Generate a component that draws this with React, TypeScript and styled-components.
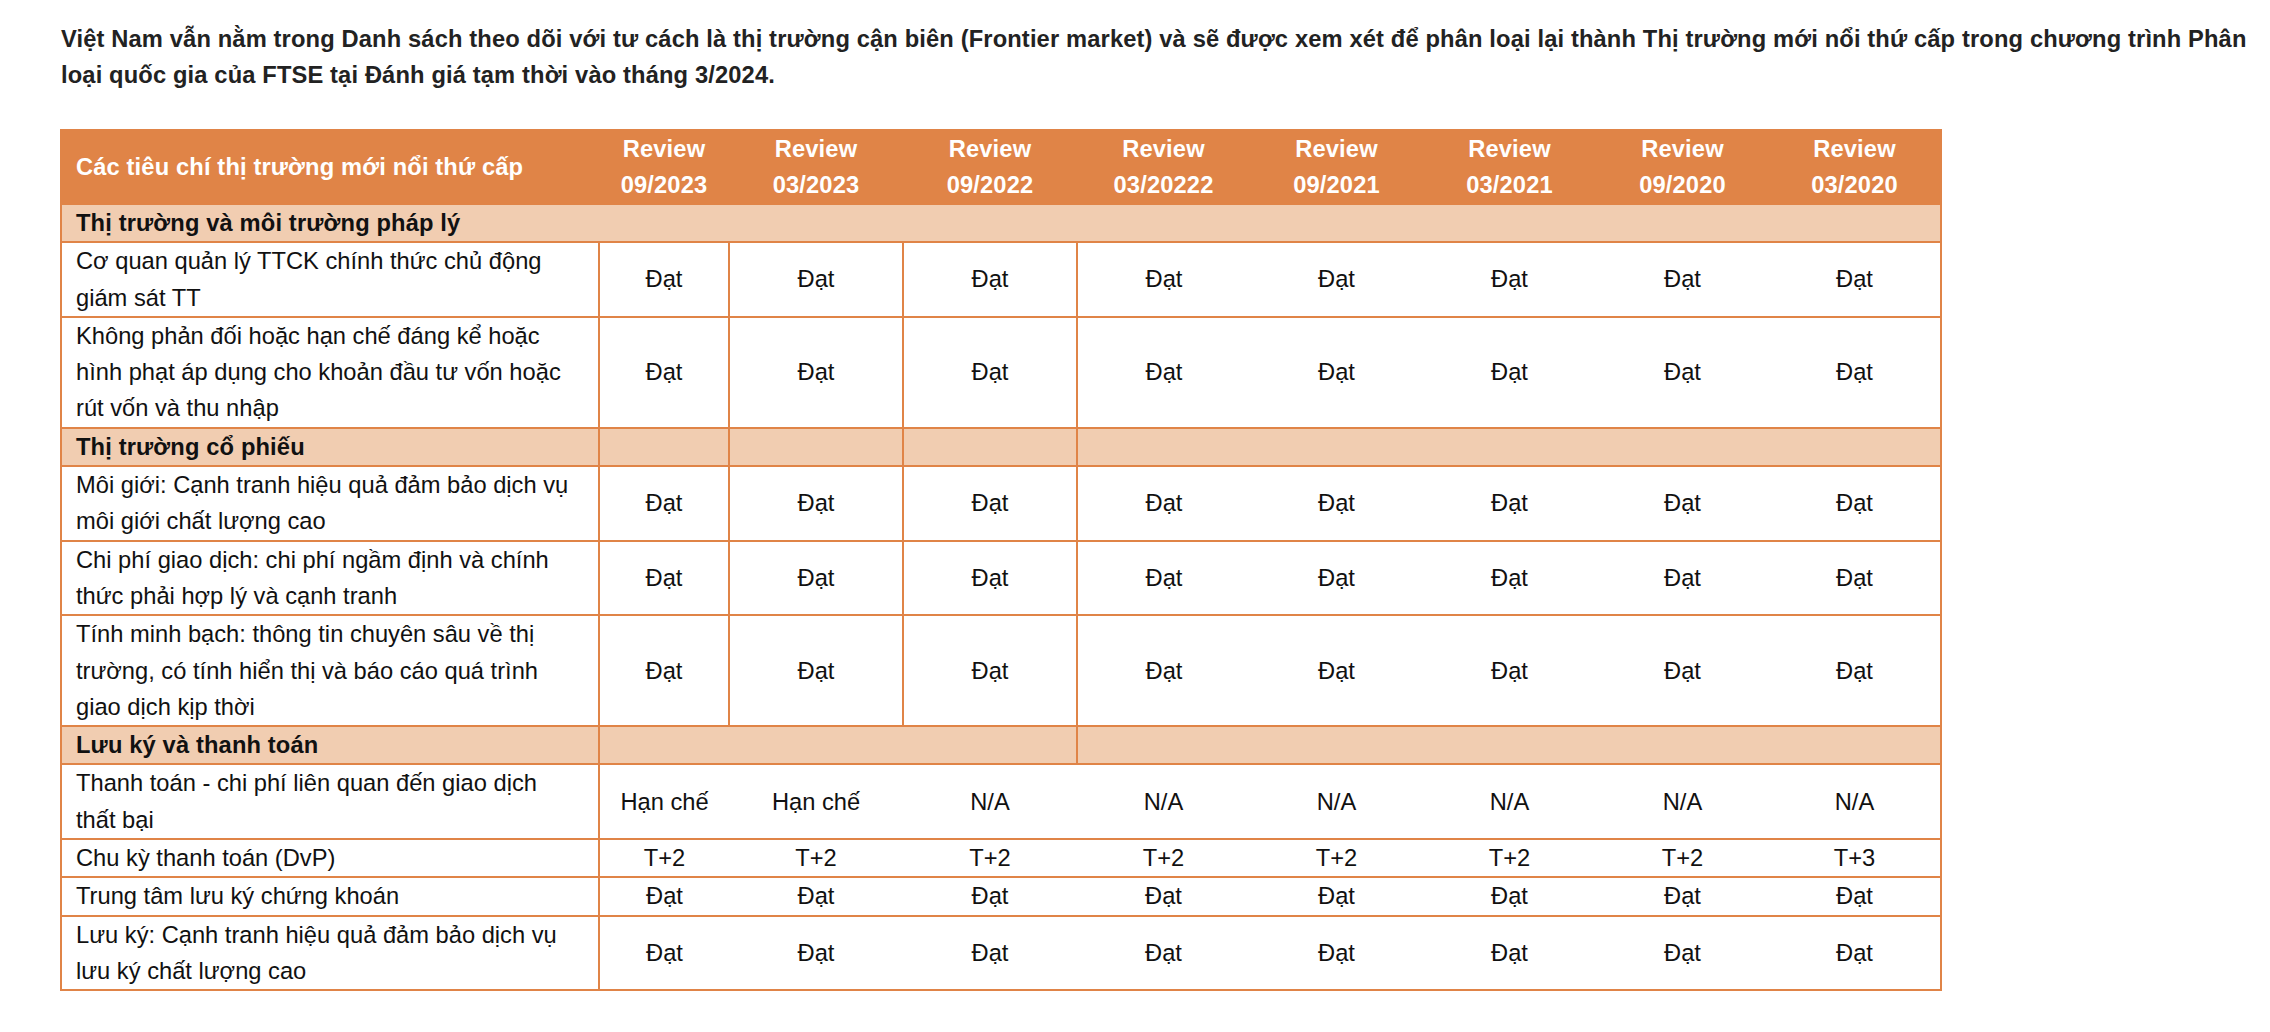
import React from "react";
import styled, { createGlobalStyle } from "styled-components";

const ORANGE = "#e08447";
const PEACH = "#f1cdb1";

const Global = createGlobalStyle`
  html, body { margin: 0; padding: 0; background: #ffffff; }
  body { font-family: "Liberation Sans", Arial, Helvetica, sans-serif; }
`;

const Page = styled.div`
  padding: 21px 10px 40px 60px;
  font-size: 23.7px;
`;

const Intro = styled.p`
  margin: 0 0 36px 1px;
  font-weight: 700;
  letter-spacing: 0.14px;
  line-height: 36px;
  color: #222222;
`;

const Table = styled.table`
  width: 1880px;
  table-layout: fixed;
  border-collapse: collapse;
  border: 2px solid ${ORANGE};
  color: #111111;
`;

const HeadCell = styled.th<{ $left?: boolean }>`
  background: ${ORANGE};
  color: #ffffff;
  font-weight: 700;
  letter-spacing: 0.14px;
  line-height: 36px;
  padding: ${(p) => (p.$left ? "0 10px 0 14px" : "0 2px")};
  text-align: ${(p) => (p.$left ? "left" : "center")};
  vertical-align: middle;
  border: none;
`;

const Row = styled.tr<{ $section?: boolean }>`
  background: ${(p) => (p.$section ? PEACH : "#ffffff")};
`;

const Cell = styled.td<{ $label?: boolean; $divider?: boolean; $bold?: boolean }>`
  line-height: 36.3px;
  padding: ${(p) => (p.$label ? "0 20px 0 14px" : "0 4px")};
  text-align: ${(p) => (p.$label ? "left" : "center")};
  vertical-align: middle;
  font-weight: ${(p) => (p.$bold ? 700 : 400)};
  letter-spacing: ${(p) => (p.$bold ? "0.14px" : "normal")};
  border-top: 2px solid ${ORANGE};
  border-bottom: 2px solid ${ORANGE};
  border-left: ${(p) => (p.$divider ? `2px solid ${ORANGE}` : "none")};
  border-right: none;
`;

const reviews = [
  "09/2023",
  "03/2023",
  "09/2022",
  "03/20222",
  "09/2021",
  "03/2021",
  "09/2020",
  "03/2020",
];

const widths = [538, 130, 174, 174, 173, 173, 173, 173, 172];

type DataRow = { label: string; values: string[]; dividers: number };

const dat = Array(8).fill("Đạt");

const group1: DataRow[] = [
  { label: "Cơ quan quản lý TTCK chính thức chủ động giám sát TT", values: dat, dividers: 4 },
  {
    label: "Không phản đối hoặc hạn chế đáng kể hoặc hình phạt áp dụng cho khoản đầu tư vốn hoặc rút vốn và thu nhập",
    values: dat,
    dividers: 4,
  },
];

const group2: DataRow[] = [
  { label: "Môi giới: Cạnh tranh hiệu quả đảm bảo dịch vụ môi giới chất lượng cao", values: dat, dividers: 4 },
  { label: "Chi phí giao dịch: chi phí ngầm định và chính thức phải hợp lý và cạnh tranh", values: dat, dividers: 4 },
  {
    label: "Tính minh bạch: thông tin chuyên sâu về thị trường, có tính hiển thị và báo cáo quá trình giao dịch kịp thời",
    values: dat,
    dividers: 4,
  },
];

const group3: DataRow[] = [
  {
    label: "Thanh toán - chi phí liên quan đến giao dịch thất bại",
    values: ["Hạn chế", "Hạn chế", "N/A", "N/A", "N/A", "N/A", "N/A", "N/A"],
    dividers: 1,
  },
  { label: "Chu kỳ thanh toán (DvP)", values: ["T+2", "T+2", "T+2", "T+2", "T+2", "T+2", "T+2", "T+3"], dividers: 1 },
  { label: "Trung tâm lưu ký chứng khoán", values: dat, dividers: 1 },
  { label: "Lưu ký: Cạnh tranh hiệu quả đảm bảo dịch vụ lưu ký chất lượng cao", values: dat, dividers: 1 },
];

const DataRows: React.FC<{ rows: DataRow[] }> = ({ rows }) => (
  <>
    {rows.map((r) => (
      <Row key={r.label}>
        <Cell $label>{r.label}</Cell>
        {r.values.map((v, i) => (
          <Cell key={i} $divider={i < r.dividers}>
            {v}
          </Cell>
        ))}
      </Row>
    ))}
  </>
);

export default function App() {
  return (
    <Page>
      <Global />
      <Intro>
        Việt Nam vẫn nằm trong Danh sách theo dõi với tư cách là thị trường cận biên (Frontier market) và sẽ
        được xem xét để phân loại lại thành Thị trường mới nổi thứ cấp trong chương trình Phân loại quốc gia của
        FTSE tại Đánh giá tạm thời vào tháng 3/2024.
      </Intro>
      <Table>
        <colgroup>
          {widths.map((w, i) => (
            <col key={i} style={{ width: w }} />
          ))}
        </colgroup>
        <thead>
          <tr>
            <HeadCell $left>Các tiêu chí thị trường mới nổi thứ cấp</HeadCell>
            {reviews.map((r) => (
              <HeadCell key={r}>
                Review
                <br />
                {r}
              </HeadCell>
            ))}
          </tr>
        </thead>
        <tbody>
          <Row $section>
            <Cell $label $bold colSpan={9}>
              Thị trường và môi trường pháp lý
            </Cell>
          </Row>
          <DataRows rows={group1} />
          <Row $section>
            <Cell $label $bold>
              Thị trường cổ phiếu
            </Cell>
            <Cell $divider />
            <Cell $divider />
            <Cell $divider />
            <Cell $divider colSpan={5} />
          </Row>
          <DataRows rows={group2} />
          <Row $section>
            <Cell $label $bold>
              Lưu ký và thanh toán
            </Cell>
            <Cell $divider colSpan={3} />
            <Cell $divider colSpan={5} />
          </Row>
          <DataRows rows={group3} />
        </tbody>
      </Table>
    </Page>
  );
}
